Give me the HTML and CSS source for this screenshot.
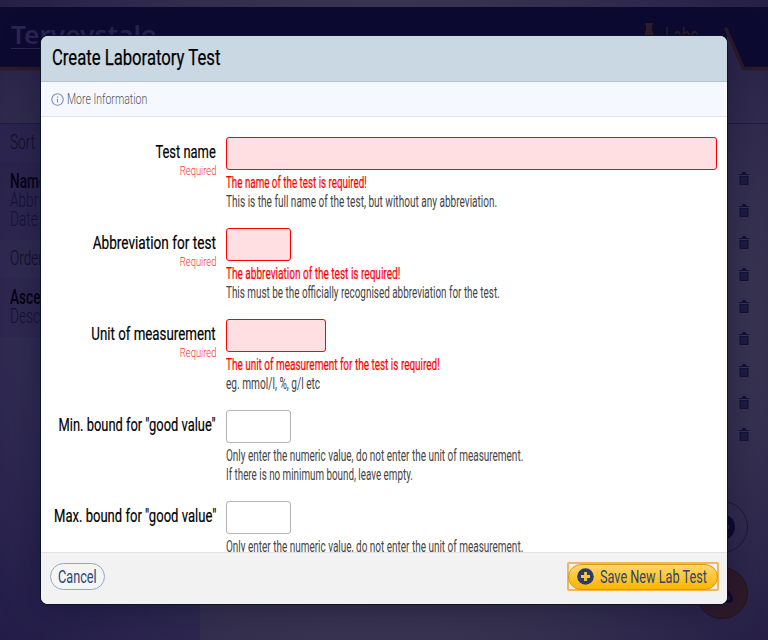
FILE: index.html
```html
<!DOCTYPE html>
<html lang="en">
<head>
<meta charset="utf-8">
<title>Create Laboratory Test</title>
<link rel="stylesheet" href="styles.css">
</head>
<body>
<svg class="symbols" width="0" height="0" aria-hidden="true">
  <symbol id="trash" viewBox="0 0 12 14"><path fill="currentColor" d="M4 0H8V2H11V3H1V2H4ZM1.500 4H10.500V13H1.500Z"/><path fill="none" stroke="#37324f" stroke-width=".7" d="M4 5V12M6 5V12M8 5V12"/></symbol>
</svg>
<div class="page">
  <header class="top">
    <svg class="top-edge" width="768" height="64" viewBox="0 0 768 64">
      <path class="edge-fill" d="M0 0H768V62H744L727 24V62H0Z"/>
      <path class="edge-line" d="M0 61.500H604M726 22L743.500 61.500H768"/>
    </svg>
    <div class="logo"><span class="fit">Terveystalo</span></div>
    <div class="tab">
      <svg width="12" height="20" viewBox="0 0 12 20"><path fill="currentColor" d="M2 0H10V2H9V7L12 15V20H0V15L3 7V2H2Z"/></svg>
      <span class="fit">Labs</span>
    </div>
  </header>
  <div class="toolbar"></div>
  <main class="content">
    <aside class="side">
      <h3><span class="fit">Sort</span></h3>
      <ul><li class="on"><span class="fit">Name</span></li><li><span class="fit">Abbr</span></li><li><span class="fit">Date</span></li></ul>
      <h3><span class="fit">Order</span></h3>
      <ul><li class="on"><span class="fit">Ascending</span></li><li><span class="fit">Descending</span></li></ul>
    </aside>
    <section class="list">
      <svg><use href="#trash"/></svg><svg><use href="#trash"/></svg><svg><use href="#trash"/></svg>
      <svg><use href="#trash"/></svg><svg><use href="#trash"/></svg><svg><use href="#trash"/></svg>
      <svg><use href="#trash"/></svg><svg><use href="#trash"/></svg><svg><use href="#trash"/></svg>
    </section>
  </main>
</div>
<div class="fabs">
  <div class="fab"><svg width="26" height="26" viewBox="0 0 26 26"><circle cx="13" cy="13" r="13" fill="#0b0b30"/><path d="M13 10V16M19.500 11V15" stroke="#2c2849" stroke-width="1.500"/></svg></div>
  <div class="fab warm"><svg width="26" height="26" viewBox="0 0 26 26"><path d="M13 3L22 17Q24 21 20 21.500H6Q2 21 4 17Z" fill="none" stroke="#0f0930" stroke-width="3"/></svg></div>
</div>
<div class="backdrop">
  <div class="modal" role="dialog">
    <h1 class="modal-head"><span class="fit">Create Laboratory Test</span></h1>
    <div class="info">
      <svg width="13" height="13" viewBox="0 0 13 13"><circle cx="6.500" cy="6.500" r="5.700" fill="none" stroke="#7c8db8" stroke-width="1.100"/><path d="M6.500 5.700V9.500M6.500 3.400V4.700" stroke="#7c8db8" stroke-width="1.200"/></svg>
      <span class="fit">More Information</span>
    </div>
    <form class="body">
      <div class="row">
        <label><span class="fit name l1">Test name</span><span class="fit req">Required</span></label>
        <div class="field"><input class="bad wide"><p class="err"><span class="fit e1">The name of the test is required!</span></p><p><span class="fit h1">This is the full name of the test, but without any abbreviation.</span></p></div>
      </div>
      <div class="row">
        <label><span class="fit name l2">Abbreviation for test</span><span class="fit req">Required</span></label>
        <div class="field"><input class="bad"><p class="err"><span class="fit e2">The abbreviation of the test is required!</span></p><p><span class="fit h2">This must be the officially recognised abbreviation for the test.</span></p></div>
      </div>
      <div class="row">
        <label><span class="fit name l3">Unit of measurement</span><span class="fit req">Required</span></label>
        <div class="field"><input class="bad mid"><p class="err"><span class="fit e3">The unit of measurement for the test is required!</span></p><p><span class="fit h3">eg. mmol/l, %, g/l etc</span></p></div>
      </div>
      <div class="row">
        <label><span class="fit name l4">Min. bound for "good value"</span></label>
        <div class="field"><input><p><span class="fit h4">Only enter the numeric value, do not enter the unit of measurement.</span></p><p><span class="fit h5">If there is no minimum bound, leave empty.</span></p></div>
      </div>
      <div class="row">
        <label><span class="fit name l5">Max. bound for "good value"</span></label>
        <div class="field"><input><p><span class="fit h4">Only enter the numeric value, do not enter the unit of measurement.</span></p></div>
      </div>
    </form>
    <footer class="foot">
      <button class="btn cancel"><span class="fit">Cancel</span></button>
      <div class="focus"><button class="btn save"><svg width="17" height="17" viewBox="0 0 17 17"><circle cx="8.500" cy="8.500" r="8.300" fill="#2b3c6b"/><path d="M8.500 4V13M4 8.500H13" stroke="#ffc835" stroke-width="2.800"/></svg><span class="fit">Save New Lab Test</span></button></div>
    </footer>
  </div>
</div>
</body>
</html>
```
FILE: styles.css
```css
* { box-sizing: border-box; }
body { margin: 0; width: 768px; height: 640px; overflow: hidden; position: relative; font-family: Roboto, sans-serif; background: #2f2a4e; }
h1, h3, p, ul { margin: 0; padding: 0; font-weight: 400; list-style: none; }
.symbols { position: absolute; }
.fit { display: inline-block; white-space: nowrap; transform: scaleX(.7); transform-origin: left center; }

.page { height: 640px; padding-top: 7px; background: radial-gradient(ellipse 480px 420px at 50% 50%, #403b58 50%, #393451 75%, #2b254b 100%, #1c1138 130%); }
.top { position: relative; height: 64px; display: flex; justify-content: space-between; padding: 15px 68px 0 11px; }
.top-edge { position: absolute; left: 0; top: 0; }
.edge-fill { fill: #0d0a31; }
.edge-line { fill: none; stroke: #2e1a28; stroke-width: 3.500; stroke-linecap: round; }
.logo { position: relative; width: 145px; height: 27px; border-bottom: 1px solid #2b2553; font: 600 26px/24px "Noto Sans", sans-serif; color: #2b2553; }
.logo .fit { transform: scaleX(1.01); }
.tab { position: relative; display: flex; gap: 10px; width: 57px; color: #32202b; font-size: 22px; line-height: 27px; }
.tab svg { flex: none; margin-top: 1px; }
.toolbar { height: 53px; border-bottom: 1px solid #211c42; }
.content { display: grid; grid-template-columns: 200px 1fr; height: 516px; }
.side { background: rgba(26, 20, 84, .25); font-size: 19.500px; color: #100d26; }
.side h3 { height: 38px; padding-left: 10px; font-size: 19.500px; line-height: 37px; font-weight: 300; }
.side ul { padding: 10px 10px 11px; background: rgba(10, 8, 60, .05); line-height: 19px; font-weight: 300; color: #15113a; }
.side .on { font-weight: 500; color: #05030f; }
.list { display: flex; flex-direction: column; align-items: flex-end; gap: 18px; padding: 48px 18px 0 0; color: #13123c; }
.list svg { width: 12px; height: 14px; }

.fabs { position: absolute; right: 20px; bottom: 21px; display: grid; gap: 14px; }
.fab { width: 52px; height: 52px; border: 1px solid #1d1a38; border-radius: 50%; display: grid; place-items: center; }
.warm { background: #2f1b28; border-color: #251422; }

.backdrop { position: absolute; inset: 0; display: flex; justify-content: center; padding-top: 36px; }
.modal { width: 686px; height: 568px; display: flex; flex-direction: column; border-radius: 7px; overflow: hidden; background: #fff; box-shadow: 0 0 0 1px #0a1526, 0 4px 34px rgba(10, 8, 40, .5); }
.modal-head { height: 46px; padding-left: 11px; background: #cad8e4; border-bottom: 1px solid #b4c4d4; font-size: 22.500px; line-height: 42px; color: #000; }
.modal-head .fit { transform: scaleX(.741); -webkit-text-stroke: .25px; }
.info { height: 35px; display: flex; align-items: center; gap: 3px; padding-left: 10px; background: #f5f9ff; border-bottom: 1px solid #dde5ec; font-size: 15px; font-weight: 300; color: #555; }
.body { height: 435px; overflow: hidden; padding: 20px 10px 0 0; display: grid; grid-auto-rows: 75px; gap: 16px; }
.row { display: grid; grid-template-columns: 175px 1fr; gap: 10px; }
label { display: flex; flex-direction: column; align-items: flex-end; padding-top: 5px; line-height: 19px; }
label .fit { transform-origin: right center; }
.name { font-size: 19px; color: #000; -webkit-text-stroke: .2px; }
.l1 { transform: scaleX(.68); }
.l2 { transform: scaleX(.717); }
.l4 { transform: scaleX(.678); }
.l5 { transform: scaleX(.687); }
.req { font-size: 13.500px; font-weight: 300; color: #ff2f2f; }
.field { min-width: 0; }
input { display: block; width: 65px; height: 33px; margin-bottom: 3px; border: 1px solid #b3b3b3; border-radius: 3px; background: #fff; }
.bad { border-color: #f00; background: #ffdfe1; }
.mid { width: 100px; }
.wide { width: 100%; }
.field p { height: 19px; font-size: 16px; line-height: 19px; color: #444; }
.field .err { color: #f00; -webkit-text-stroke: .2px; }
.e1 { transform: scaleX(.613); }
.e2 { transform: scaleX(.628); }
.e3 { transform: scaleX(.623); }
.h1 { transform: scaleX(.628); }
.h2 { transform: scaleX(.619); }
.h3 { transform: scaleX(.633); }
.h4 { transform: scaleX(.623); }
.h5 { transform: scaleX(.614); }
.foot { flex: 1; display: flex; justify-content: space-between; align-items: flex-start; padding: 9px 8px 0 9px; background: #f2f2f2; border-top: 1px solid #e3e3e3; }
.btn { height: 27px; padding: 0; border-radius: 14px; font: 18.500px/25px Roboto, sans-serif; text-align: left; color: #2d4570; }
.btn .fit { transform: scaleX(.686); }
.cancel { width: 55px; margin-top: 1px; padding: 1px 0 0 7px; border: 1px solid #8fa9c9; background: #f5f5f5; }
.focus { width: 152px; height: 29px; border: 2px solid #efb75d; border-radius: 2px; }
.save { width: 150px; height: 26px; margin: -.5px -1px; display: flex; align-items: center; gap: 6px; padding-left: 8px; border: 1px solid #d79a12; background: linear-gradient(#ffd76c, #ffb400); line-height: 24px; }
.save svg { flex: none; }
```
